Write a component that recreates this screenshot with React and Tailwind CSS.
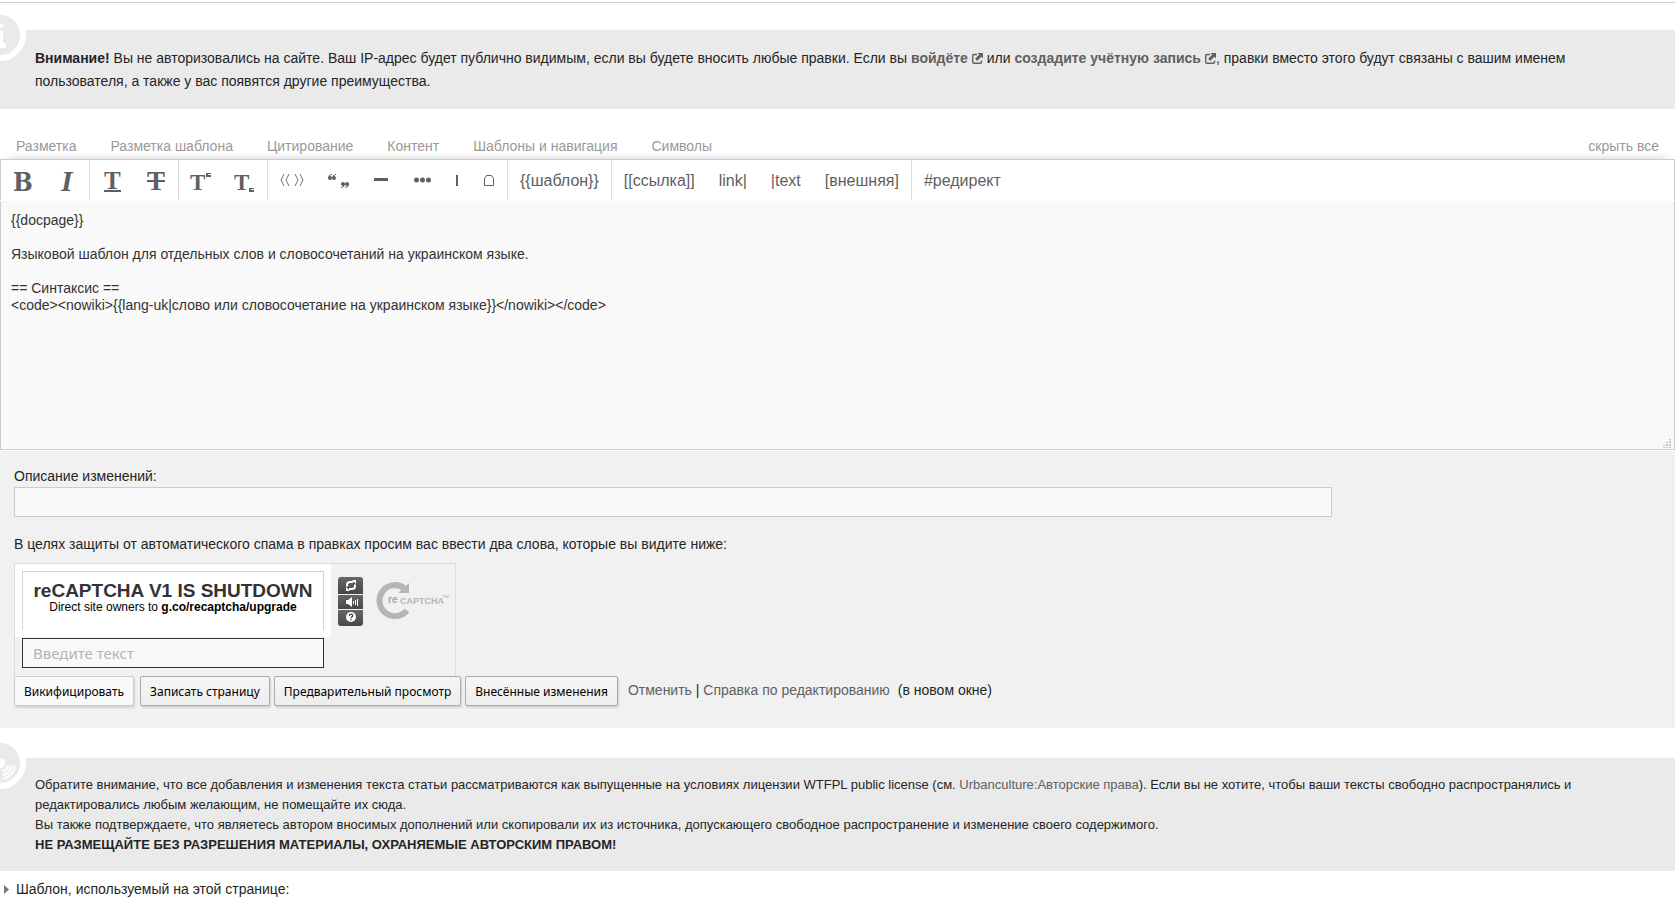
import React, { useState } from 'react';

const tabs = [
  'Разметка',
  'Разметка шаблона',
  'Цитирование',
  'Контент',
  'Шаблоны и навигация',
  'Символы',
];

const pageText = `{{docpage}}

Языковой шаблон для отдельных слов и словосочетаний на украинском языке.

== Синтаксис ==
<code><nowiki>{{lang-uk|слово или словосочетание на украинском языке}}</nowiki></code>`;

const Glyph = ({ width, children }) => (
  <svg
    width={width}
    height="40"
    viewBox={`0 0 ${width} 40`}
    fill="#606060"
    aria-hidden="true"
    className="block"
  >
    {children}
  </svg>
);

// 44px wide picture buttons and text buttons share one bar
const toolGroups = [
  [
    {
      label: 'Полужирный',
      icon: (
        <Glyph width={44}>
          <text x="12" y="31" className="font-['DejaVu_Serif_Condensed'] text-[26px] font-bold">B</text>
        </Glyph>
      ),
    },
    {
      label: 'Курсив',
      icon: (
        <Glyph width={44}>
          <text x="16" y="31" className="font-['Liberation_Serif'] text-[30px] font-bold italic">I</text>
        </Glyph>
      ),
    },
  ],
  [
    {
      label: 'Подчёркнутый',
      icon: (
        <Glyph width={44}>
          <text x="14" y="29" className="font-['Liberation_Serif'] text-[25px] font-bold">T</text>
          <path d="M14 30h17v2H14z" />
        </Glyph>
      ),
    },
    {
      label: 'Зачёркнутый',
      icon: (
        <Glyph width={44}>
          <text x="13" y="30" className="font-['Liberation_Serif'] text-[27px] font-bold">T</text>
          <path d="M13 20h18v2H13z" />
        </Glyph>
      ),
    },
  ],
  [
    {
      label: 'Верхний индекс',
      icon: (
        <Glyph width={44}>
          <text x="11" y="30" className="font-['Liberation_Serif'] text-[23px] font-bold">T</text>
          <path d="M27 13h5v1h-3v1h3v2h-5z" />
        </Glyph>
      ),
    },
    {
      label: 'Нижний индекс',
      icon: (
        <Glyph width={44}>
          <text x="11" y="30" className="font-['Liberation_Serif'] text-[23px] font-bold">T</text>
          <path d="M26 28h5v1h-3v1h3v2h-5z" />
        </Glyph>
      ),
    },
  ],
  [
    {
      label: 'Кавычки-ёлочки',
      padded: true,
      icon: (
        <Glyph width={24}>
          <path
            d="M4 14l-3 6 3 6M9 14l-3 6 3 6M15 14l3 6-3 6M20 14l3 6-3 6"
            fill="none"
            stroke="#707070"
          />
        </Glyph>
      ),
    },
    {
      label: 'Кавычки-лапки',
      padded: true,
      icon: (
        <Glyph width={22}>
          <path d="M4 14q-4 1-4 4a2 2 0 1 0 2-2q0-1 2-1zM8 14q-4 1-4 4a2 2 0 1 0 2-2q0-1 2-1z" />
          <path d="M13 28q4-1 4-4a2 2 0 1 0-2 2q0 1-2 1zM17 28q4-1 4-4a2 2 0 1 0-2 2q0 1-2 1z" />
        </Glyph>
      ),
    },
    {
      label: 'Тире',
      padded: true,
      icon: (
        <Glyph width={16}>
          <path d="M0 18h14v3H0z" />
        </Glyph>
      ),
    },
    {
      label: 'Многоточие',
      padded: true,
      icon: (
        <Glyph width={17}>
          <circle cx="2.500" cy="20" r="2.500" />
          <circle cx="8.500" cy="20" r="2.500" />
          <circle cx="14.500" cy="20" r="2.500" />
        </Glyph>
      ),
    },
    {
      label: 'Ударение',
      padded: true,
      icon: (
        <Glyph width={4}>
          <path d="M1 15h2v11H1z" />
        </Glyph>
      ),
    },
    {
      label: 'Неразрывный пробел',
      padded: true,
      icon: (
        <Glyph width={12}>
          <path d="M1.500 25.500v-7l2-3h5l2 3v7z" fill="none" stroke="#606060" />
        </Glyph>
      ),
    },
  ],
  [{ text: '{{шаблон}}' }],
  [{ text: '[[ссылка]]' }, { text: 'link|' }, { text: '|text' }, { text: '[внешняя]' }],
  [{ text: '#редирект' }],
];

const ExternalIcon = () => (
  <svg width="11" height="11" viewBox="0 0 11 11" className="ml-1 inline-block align-[-1px]" aria-hidden="true">
    <path
      d="M5 1.500H2Q.7 1.500.7 2.700V9q0 1.200 1.200 1.200h6.400q1.200 0 1.200-1.200V7.500"
      fill="none"
      stroke="#606060"
      strokeWidth="1.400"
    />
    <path d="M5.500 0H11v5.500L9.300 3.800 5.200 7.900 3.100 5.800 7.200 1.700z" fill="#606060" />
  </svg>
);

const Badge = ({ children }) => (
  <div className="absolute -top-[21px] -left-[26px] h-[52px] w-[52px] rounded-full border-6 border-white bg-[#eaeaea]">
    <svg width="40" height="40" viewBox="0 0 40 40" aria-hidden="true">
      {children}
    </svg>
  </div>
);

const ToolButton = ({ tool }) => {
  if (tool.text) {
    return (
      <button type="button" className="px-3 pt-px text-base text-[#606060]">
        {tool.text}
      </button>
    );
  }
  return (
    <button type="button" aria-label={tool.label} className={tool.padded ? 'px-3' : ''}>
      {tool.icon}
    </button>
  );
};

const EditButton = ({ children }) => (
  <button
    type="submit"
    className="h-[30px] rounded-[2px] border border-[#aaa] bg-gradient-to-b from-[#f6f6f6] to-[#ededed] px-[9px] pt-px font-['Noto_Sans',sans-serif] text-xs text-black shadow-[1px_2px_2px_rgba(0,0,0,0.12)]"
  >
    {children}
  </button>
);

const Captcha = () => (
  <div className="mt-[9px] flex h-[113px] w-[442px] border border-b-0 border-[#dcdcdc]">
    <div className="w-[316px]">
      <div className="h-[73px] bg-white px-[7px] pt-[7px]">
        <div className="h-[59px] border border-b-0 border-[#d4d4d4] pt-[9px] text-center whitespace-nowrap">
          <div className="text-[19px] leading-[20px] font-bold text-[#333]">reCAPTCHA V1 IS SHUTDOWN</div>
          <div className="text-xs leading-[13px] text-black">
            Direct site owners to <b>g.co/recaptcha/upgrade</b>
          </div>
        </div>
      </div>
      <input
        type="text"
        aria-label="Введите текст"
        placeholder="Введите текст"
        className="mt-px ml-[7px] block h-[30px] w-[302px] border border-[#333] bg-[#f9f9f9] px-[10px] font-['Noto_Sans',sans-serif] text-[15px] placeholder:text-[#b4b4b4]"
      />
    </div>
    <div className="mt-[13px] ml-[7px] flex w-[25px] flex-col gap-px">
      <button type="button" aria-label="Обновить" className="h-[17px] rounded-t-[3px] bg-gradient-to-b from-[#666] to-[#484848]">
        <svg width="25" height="17" viewBox="0 0 25 17" fill="none" stroke="#fff" strokeWidth="2" className="block">
          <path d="M9 9.500V8q0-3 3-3h3M17 7.500V9q0 3-3 3h-3" />
          <path d="M14 3h4v4zM12 14H8v-4z" fill="#fff" stroke="none" />
        </svg>
      </button>
      <button type="button" aria-label="Прослушать" className="h-[14px] bg-gradient-to-b from-[#666] to-[#484848]">
        <svg width="25" height="14" viewBox="0 0 25 14" fill="#fff" className="block">
          <path d="M8 5h2l4-3v10l-4-3H8zM15 6h1v3h-1zM17 5h1v5h-1zM19 4h1v7h-1z" />
        </svg>
      </button>
      <button type="button" aria-label="Помощь" className="h-[16px] rounded-b-[3px] bg-gradient-to-b from-[#666] to-[#484848]">
        <svg width="25" height="16" viewBox="0 0 25 16" className="block">
          <circle cx="13" cy="7" r="5" fill="#fff" />
          <path
            d="M11.300 6q0-1.800 1.700-1.800t1.700 1.500q0 .8-.8 1.200t-.9 1.200M13 9v1.300"
            fill="none"
            stroke="#444"
            strokeWidth="1.300"
          />
        </svg>
      </button>
    </div>
    <svg width="76" height="38" viewBox="0 0 76 38" className="mt-[17px] ml-[13px]" aria-label="reCAPTCHA">
      <path d="M31 29.500A15.500 15.500 0 1 1 28 7" fill="none" stroke="#b5b5b5" strokeWidth="6" />
      <path d="M33 2v10H22z" fill="#b5b5b5" />
      <text x="12" y="22" fill="#a8a8a8" className="text-[10px] font-bold">re</text>
      <text x="24" y="23" fill="#b5b5b5" className="font-['Liberation_Sans_Narrow','Liberation_Sans'] text-[9px] font-bold">
        CAPTCHA
      </text>
      <text x="66" y="19" fill="#b5b5b5" className="text-[7px]">™</text>
    </svg>
  </div>
);

const App = () => {
  const [text, setText] = useState(pageText);
  const [summary, setSummary] = useState('');

  return (
    <div className="overflow-x-hidden bg-white pt-[2px] font-['Liberation_Sans',Arial,sans-serif] text-sm text-[#252525]">
      <div className="border-t border-[#ccc] pt-[27px]">
        {/* anonymous editing warning */}
        <div className="relative bg-[#eaeaea] px-[35px] pt-[17px] pb-4 leading-[23px]">
          <Badge>
            <path d="M16 9h7v4h-7zM14 16h9v12h3v5H14v-5h3v-8h-3z" fill="#fff" />
          </Badge>
          <b>Внимание!</b> Вы не авторизовались на сайте. Ваш IP-адрес будет публично видимым, если вы
          будете вносить любые правки. Если вы{' '}
          <a href="#login" className="font-bold text-[#606060]">
            войдёте
            <ExternalIcon />
          </a>{' '}
          или{' '}
          <a href="#signup" className="font-bold text-[#606060]">
            создадите учётную запись
            <ExternalIcon />
          </a>
          , правки вместо этого будут связаны с вашим именем пользователя, а также у вас появятся
          другие преимущества.
        </div>

        {/* toolbar */}
        <div className="flex h-[50px] items-end justify-between px-4 pb-[3px] leading-5 text-[#999]">
          <div className="flex gap-[34px]">
            {tabs.map((tab) => (
              <button type="button" key={tab}>
                {tab}
              </button>
            ))}
          </div>
          <button type="button">скрыть все</button>
        </div>
        <div className="flex h-[41px] border border-b-0 border-[#ccc] bg-white shadow-[0_-8px_8px_-8px_rgba(0,0,0,0.2)]">
          {toolGroups.map((group, index) => (
            <div key={index} className="flex border-r border-[#dcdcdc] last:border-r-0">
              {group.map((tool) => (
                <ToolButton key={tool.text || tool.label} tool={tool} />
              ))}
            </div>
          ))}
        </div>

        <form onSubmit={(e) => e.preventDefault()}>
          <div className="relative my-px">
            <textarea
              aria-label="Текст страницы"
              spellCheck={false}
              value={text}
              onChange={(e) => setText(e.target.value)}
              className="block h-[249px] w-full resize-none border border-t-0 border-[#ccc] bg-[#f9f9f9] px-[10px] pt-[11px] leading-[17px] text-[#333]"
            />
            <svg width="9" height="9" className="absolute right-[3px] bottom-[2px]" fill="#c4c4c4" aria-hidden="true">
              <path d="M0 6h2v1H0zM0 8h2v1H0zM3 3h2v1H3zM3 5h2v2H3zM3 8h2v1H3zM6 0h2v1H6zM6 2h2v2H6zM6 5h2v2H6zM6 8h2v1H6z" />
            </svg>
          </div>

          {/* summary, captcha and submit row */}
          <div className="bg-[#f1f1f1] px-[14px] pt-[15px] pb-[22px] leading-5">
            <label htmlFor="summary" className="block">
              Описание изменений:
            </label>
            <input
              id="summary"
              type="text"
              value={summary}
              onChange={(e) => setSummary(e.target.value)}
              className="mt-px block h-[30px] w-4/5 border border-[#ccc] bg-[#f9f9f9] px-2"
            />
            <p className="mt-[17px]">
              В целях защиты от автоматического спама в правках просим вас ввести два слова, которые вы
              видите ниже:
            </p>
            <Captcha />
            <div className="flex items-start">
              <button
                type="button"
                className="mr-[6px] h-[30px] rounded-[2px] border border-[#ccc] bg-[#f9f9f9] px-[9px] pt-px font-['Noto_Sans',sans-serif] text-xs text-black shadow-[1px_2px_2px_rgba(0,0,0,0.12)]"
              >
                Викифицировать
              </button>
              <div className="flex gap-1">
                <EditButton>Записать страницу</EditButton>
                <EditButton>Предварительный просмотр</EditButton>
                <EditButton>Внесённые изменения</EditButton>
              </div>
              <div className="ml-[10px] pt-1">
                <a href="#cancel" className="text-[#606060]">Отменить</a> |{' '}
                <a href="#help" className="text-[#606060]">Справка по редактированию</a>
                <span className="ml-2">(в новом окне)</span>
              </div>
            </div>
          </div>
        </form>

        {/* licence note */}
        <div className="relative mt-[30px] bg-[#eaeaea] px-[35px] pt-[17px] pb-4 text-[13px] leading-5">
          <Badge>
            <circle cx="20" cy="20" r="5" fill="#fff" />
            <path
              d="M28.500 22A8.700 8.700 0 0 1 22 28.500M32 22.500A12.300 12.300 0 0 1 22.500 32M35.500 23A15.800 15.800 0 0 1 23 35.500"
              fill="none"
              stroke="#fff"
              strokeWidth="2"
            />
          </Badge>
          <p>
            Обратите внимание, что все добавления и изменения текста статьи рассматриваются как
            выпущенные на условиях лицензии WTFPL public license (см.{' '}
            <a href="#copyright" className="text-[#606060]">Urbanculture:Авторские права</a>). Если вы
            не хотите, чтобы ваши тексты свободно распространялись и редактировались любым желающим,
            не помещайте их сюда.
          </p>
          <p>
            Вы также подтверждаете, что являетесь автором вносимых дополнений или скопировали их из
            источника, допускающего свободное распространение и изменение своего содержимого.
          </p>
          <p className="font-bold">НЕ РАЗМЕЩАЙТЕ БЕЗ РАЗРЕШЕНИЯ МАТЕРИАЛЫ, ОХРАНЯЕМЫЕ АВТОРСКИМ ПРАВОМ!</p>
        </div>
        <button type="button" className="mt-2 flex items-center gap-[7px] pl-1 leading-5">
          <svg width="5" height="9" viewBox="0 0 5 9" fill="#777" aria-hidden="true">
            <path d="M0 0l5 4.500L0 9z" />
          </svg>
          Шаблон, используемый на этой странице:
        </button>
      </div>
    </div>
  );
};

export default App;
